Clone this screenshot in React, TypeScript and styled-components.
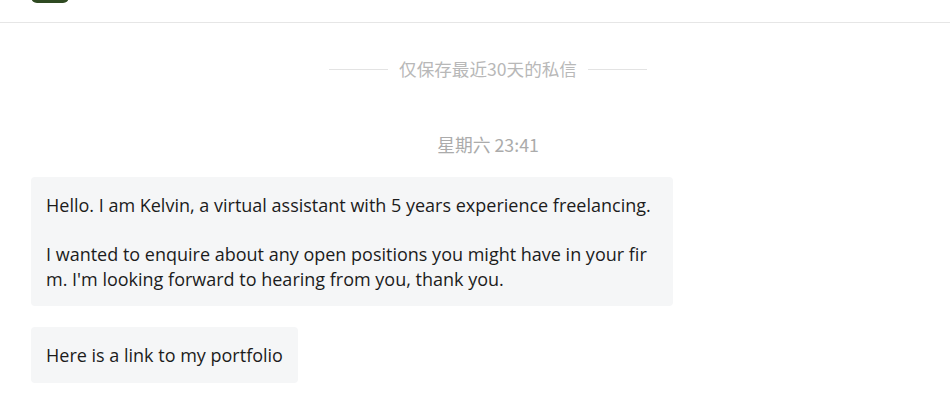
import React from "react";
import styled, { createGlobalStyle } from "styled-components";

const Global = createGlobalStyle`
  html, body { margin: 0; padding: 0; background: #ffffff; }
  body { font-family: "Open Sans", "Noto Sans CJK SC", sans-serif; }
`;

const Page = styled.div`
  width: 950px;
  height: 405px;
  overflow: hidden;
  display: flex;
  flex-direction: column;
  background: #fff;
`;

const Header = styled.div`
  height: 22px;
  flex: none;
  border-bottom: 1px solid #e6e6e6;
  padding-left: 31px;
  display: flex;
  align-items: flex-start;
  overflow: hidden;
`;

const Avatar = styled.div`
  width: 38px;
  height: 38px;
  margin-top: -35px;
  border-radius: 6px;
  background: #2f4a22;
`;

const Thread = styled.div`
  display: flex;
  flex-direction: column;
  padding: 0 5px 0 31px;
`;

const Notice = styled.div`
  margin-top: 34px;
  align-self: center;
  display: flex;
  align-items: center;
  gap: 11px;
  font-family: "Noto Sans CJK SC", sans-serif;
  font-size: 17.6px;
  color: #b8b8b8;
  line-height: 24px;
`;

const Rule = styled.div`
  width: 59px;
  height: 1px;
  background: #e3e3e3;
`;

const Stamp = styled.div`
  margin-top: 51px;
  align-self: center;
  font-family: "Noto Sans CJK SC", sans-serif;
  font-size: 17.8px;
  line-height: 24px;
  color: #ababab;
`;

const Bubble = styled.div<{ $mt: number }>`
  margin-top: ${(p) => p.$mt}px;
  align-self: flex-start;
  max-width: 612px;
  padding: 16px 15px 15px;
  background: #f5f6f7;
  border-radius: 4px;
  font-family: "Open Sans", "Noto Sans CJK SC", sans-serif;
  font-size: 18px;
  line-height: 24.5px;
  color: #1c1c1c;
  word-break: break-all;
  white-space: pre-wrap;
`;

export default function App() {
  return (
    <>
      <Global />
      <Page>
        <Header>
          <Avatar />
        </Header>
        <Thread>
          <Notice>
            <Rule />
            <span>仅保存最近30天的私信</span>
            <Rule />
          </Notice>
          <Stamp>星期六 23:41</Stamp>
          <Bubble $mt={21}>
            {"Hello. I am Kelvin, a virtual assistant with 5 years experience freelancing.\n\nI wanted to enquire about any open positions you might have in your firm. I'm looking forward to hearing from you, thank you."}
          </Bubble>
          <Bubble $mt={21}>Here is a link to my portfolio</Bubble>
        </Thread>
      </Page>
    </>
  );
}
